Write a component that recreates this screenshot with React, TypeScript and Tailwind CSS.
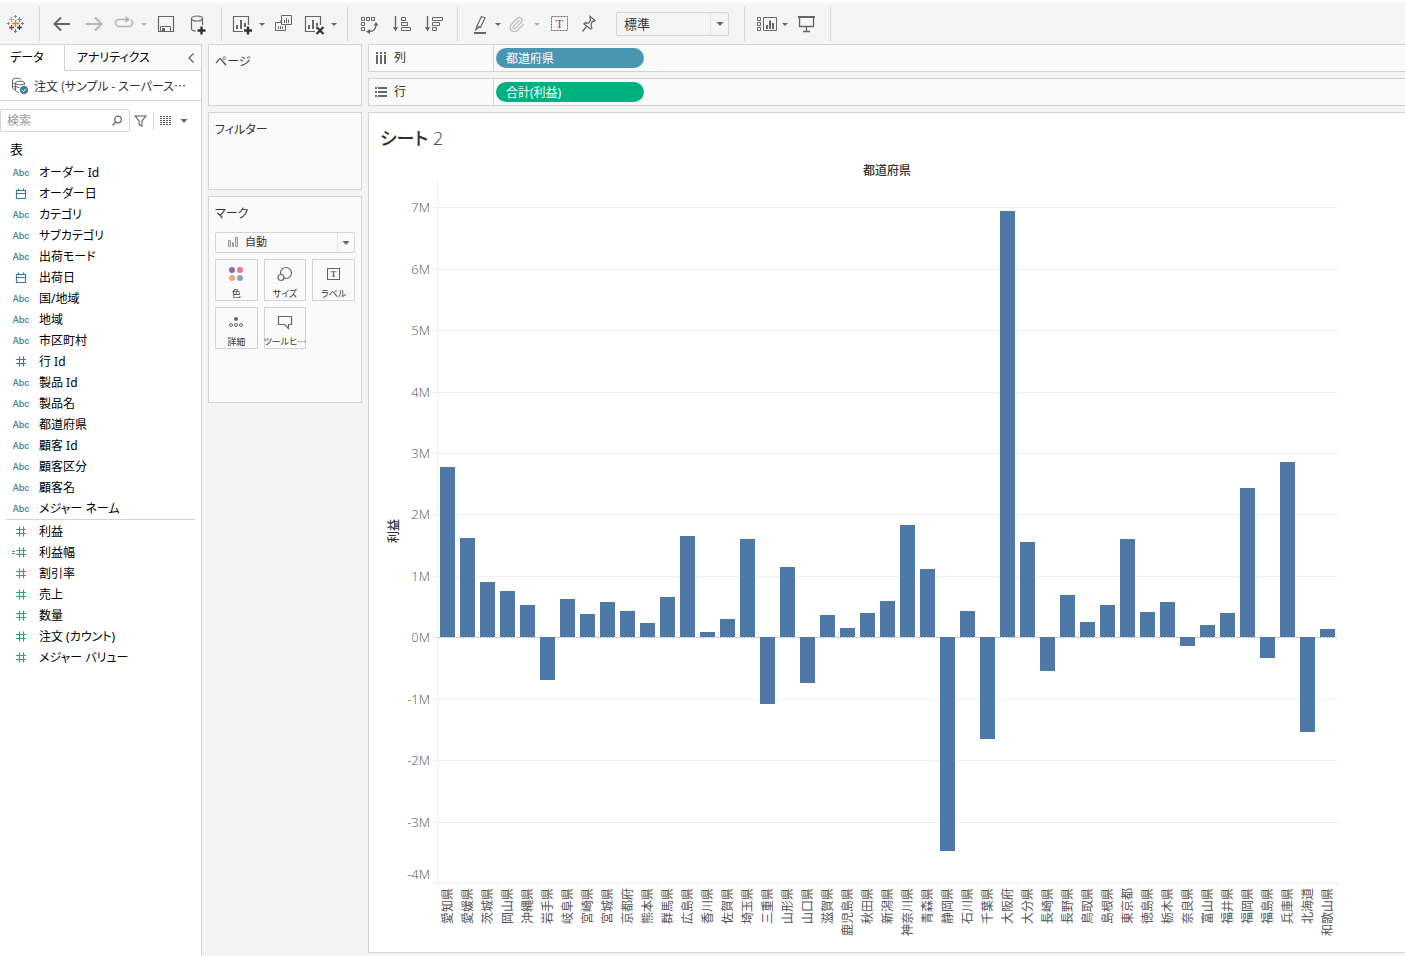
import React from 'react';
import { Paperclip } from 'lucide-react';

type IconProps = { children: React.ReactNode; className?: string };

const Icon = ({ children, className = 'text-[#666]' }: IconProps) => (
  <svg
    viewBox="0 0 24 24"
    className={`h-6 w-6 shrink-0 ${className}`}
    fill="none"
    stroke="currentColor"
    strokeWidth="1"
    aria-hidden="true"
  >
    {children}
  </svg>
);

const ToolButton = ({ label, className = '', children }: { label: string; className?: string; children: React.ReactNode }) => (
  <button type="button" aria-label={label} className={`flex h-6 w-6 shrink-0 items-center justify-center ${className}`}>
    {children}
  </button>
);

const Caret = ({ className = 'text-[#666]' }: { className?: string }) => (
  <svg viewBox="0 0 8 4" className={`h-1 w-2 shrink-0 ${className}`} fill="currentColor" aria-hidden="true">
    <path d="M0.5 0h7L4 4z" />
  </svg>
);

const CaretButton = ({ label, className = '', tone }: { label: string; className?: string; tone?: string }) => (
  <button type="button" aria-label={label} className={`flex h-6 w-3 shrink-0 items-center justify-center ${className}`}>
    <svg viewBox="0 0 6 3" className={`h-[3px] w-1.5 ${tone ?? 'text-[#666]'}`} fill="currentColor">
      <path d="M0 0h6L3 3z" />
    </svg>
  </button>
);

const Toolbar = () => (
  <header className="flex border-t-[3px] border-white bg-[#f5f5f5] pt-1 pb-[3px]">
    <div className="flex h-[34px] w-10 items-center border-r border-neutral-300 pl-1">
      <ToolButton label="スタート ページ">
        <Icon>
          <path d="M11.5 8v7M8 11.5h7" stroke="#eb8020" strokeWidth="1.4" />
          <path d="M7.5 5v5M5 7.5h5" stroke="#eb9a54" strokeWidth="1.200" />
          <path d="M15.5 5v5M13 7.500h5" stroke="#5f96a0" strokeWidth="1.200" />
          <path d="M7.5 13v5M5 15.500h5" stroke="#c4283a" strokeWidth="1.300" />
          <path d="M15.5 13v5M13 15.500h5" stroke="#1f447e" strokeWidth="1.300" />
          <path d="M11.5 3v3M10 4.500h3" stroke="#6f95b5" />
          <path d="M11.5 17v4M10 19.500h3" stroke="#5a78a5" />
          <path d="M4.500 10v3M3 11.500h3" stroke="#6f95b5" />
          <path d="M18.500 10v3M17 11.500h3" stroke="#7c6da0" />
        </Icon>
      </ToolButton>
    </div>

    <div className="flex items-center border-r border-neutral-300 pl-2.5 pr-[11px]">
      <ToolButton label="元に戻す">
        <Icon><path d="M4.5 12H20M11 5.5L4.5 12l6.500 6.500" strokeWidth="2" /></Icon>
      </ToolButton>
      <ToolButton label="やり直し" className="ml-2">
        <Icon className="text-[#b5b5b5]"><path d="M4 12h15.500M13 5.500l6.500 6.500-6.500 6.500" strokeWidth="2" /></Icon>
      </ToolButton>
      <ToolButton label="再生" className="ml-1.5">
        <Icon className="text-[#b5b5b5]">
          <path d="M15 7.500H7a3.500 3.500 0 0 0 0 7h10a3.500 3.500 0 0 0 2-6.400" strokeWidth="1.4" />
          <path d="M13.500 4l4.500 3.500-4.500 3.500z" fill="currentColor" stroke="none" />
        </Icon>
      </ToolButton>
      <CaretButton label="再生メニュー" className="ml-0.5" tone="text-[#b5b5b5]" />
      <ToolButton label="保存" className="ml-1">
        <Icon>
          <path d="M4.500 4.500h15v15h-15z" strokeWidth="1.2" />
          <path d="M6.500 19.500v-5h10v5" />
          <path d="M8 16h3v3H8z" fill="currentColor" stroke="none" />
        </Icon>
      </ToolButton>
      <ToolButton label="新しいデータ ソース" className="ml-2">
        <Icon>
          <ellipse cx="11" cy="6.500" rx="5.500" ry="2.500" strokeWidth="1.2" />
          <path d="M5.500 6.500V16.500c0 1.600 2 2.500 4.500 2.500M16.500 6.500V13" strokeWidth="1.2" />
          <path d="M15.500 14.500v8M11.500 18.500h8" stroke="#333" strokeWidth="2.400" />
        </Icon>
      </ToolButton>
    </div>

    <div className="flex items-center border-r border-neutral-300 pl-2 pr-[7px]">
      <ToolButton label="新しいワークシート">
        <Icon>
          <path d="M13 19.500H3.500v-15h15V13" strokeWidth="1.2" />
          <path d="M7 13v4M11 8v9M15 11v4" strokeWidth="2" />
          <path d="M18 14.500v8M14 18.500h8" stroke="#333" strokeWidth="2.400" />
        </Icon>
      </ToolButton>
      <CaretButton label="ワークシート メニュー" className="ml-0.5" />
      <ToolButton label="複製" className="ml-1">
        <Icon>
          <path d="M9.500 8V3.500h10v9h-5.500M9 8v2.500H3.500v8h10V12.500H9.500V8" />
          <path d="M12.500 8v3M14.500 6v5M16.500 7.500V11M6.500 14.500v2.500M8.500 14v3M10.500 14.500v2.500" />
        </Icon>
      </ToolButton>
      <ToolButton label="シートのクリア" className="ml-1.5">
        <Icon>
          <path d="M13 19.500H3.500v-15h15V13" strokeWidth="1.2" />
          <path d="M7 13v4M11 8v9M15 11v3" strokeWidth="2" />
          <path d="M14.500 15l7 7M21.500 15l-7 7" stroke="#333" strokeWidth="2.200" />
        </Icon>
      </ToolButton>
      <CaretButton label="クリア メニュー" className="ml-0.5" />
    </div>

    <div className="flex items-center gap-2 border-r border-neutral-300 pl-[9px] pr-3">
      <ToolButton label="行と列の交換">
        <Icon>
          <path d="M4.500 5.500h3v3h-3zM9.500 5.500h3v3h-3zM14.500 5.500h3v3h-3zM4.500 10.500h3v3h-3zM4.500 15.500h3v3h-3z" />
          <path d="M19 12.500c0 4-2.500 7-7 7" strokeWidth="1.4" />
          <path d="M16.500 13.500l2.500-3.500 2.500 3.500zM13 17v5l-4-2.500z" fill="currentColor" stroke="none" />
        </Icon>
      </ToolButton>
      <ToolButton label="昇順で並べ替え">
        <Icon>
          <path d="M6.500 4v12" strokeWidth="1.4" />
          <path d="M4 15h5l-2.500 4.500z" fill="currentColor" stroke="none" />
          <path d="M12.500 5.500h4v3h-4zM12.500 10.500h6v3h-6zM12.500 15.500h9v3h-9z" />
        </Icon>
      </ToolButton>
      <ToolButton label="降順で並べ替え">
        <Icon>
          <path d="M6.500 4v12" strokeWidth="1.4" />
          <path d="M4 15h5l-2.500 4.500z" fill="currentColor" stroke="none" />
          <path d="M11.500 5.500h10v3h-10zM11.500 10.500h7v3h-7zM11.500 15.500h4v3h-4z" />
        </Icon>
      </ToolButton>
    </div>

    <div className="flex items-center border-r border-neutral-300 pl-2.5 pr-[15px]">
      <ToolButton label="ハイライト">
        <Icon>
          <path d="M6 21h12" strokeWidth="2" />
          <path d="M13.500 4.500l3.500 1.500-4.500 9.500-3.500-1.700zM9 13.800L8 17.500l3.300-2.300M8 17.500l-1 1" strokeWidth="1.2" />
        </Icon>
      </ToolButton>
      <CaretButton label="ハイライト メニュー" />
      <ToolButton label="グループ メンバー">
        <Paperclip className="h-[17px] w-[17px] text-[#b5b5b5]" strokeWidth={1.5} />
      </ToolButton>
      <CaretButton label="グループ メニュー" className="ml-[3px]" tone="text-[#b5b5b5]" />
      <ToolButton label="マーク ラベルを表示" className="ml-1">
        <Icon>
          <path d="M4.500 4.500h16v14h-16z" strokeDasharray="2 1" />
          <text x="12.500" y="16" textAnchor="middle" fill="currentColor" stroke="none" className="font-['Liberation_Serif',serif] text-[13px]">T</text>
        </Icon>
      </ToolButton>
      <ToolButton label="軸の固定" className="ml-1.5">
        <Icon>
          <path d="M13 4.500l5 4-1.500 1-1-.3-1.500 3 .8 4-1.300.8-6.500-5 1-1.200 3.500.3 2-2.600zM9.500 14.500L5.500 19.500" strokeWidth="1.3" />
        </Icon>
      </ToolButton>
      <div className="relative ml-[15px] w-[113px] text-[#333]">
        <select aria-label="表示サイズ" className="block h-6 w-full appearance-none rounded-xs border border-neutral-300 bg-[#f5f5f5] px-[7px] text-[13px] leading-5">
          <option>標準</option>
        </select>
        <span className="pointer-events-none absolute inset-y-px right-px flex w-[18px] items-center justify-center border-l border-neutral-200">
          <Caret />
        </span>
      </div>
    </div>

    <div className="flex items-center border-r border-neutral-300 pl-2.5 pr-[11px]">
      <ToolButton label="表示形式">
        <Icon>
          <path d="M2.500 5.500h3v3h-3zM2.500 10.500h3v3h-3zM2.500 15.500h3v3h-3zM8.500 5.500h13v13h-13z" />
          <path d="M12 13v4M15 8.500V17M18 11v6" strokeWidth="2" />
        </Icon>
      </ToolButton>
      <CaretButton label="表示形式メニュー" />
      <ToolButton label="プレゼンテーション モード" className="ml-1">
        <Icon>
          <path d="M3 5h17" strokeWidth="2" />
          <path d="M4.500 5v9.500h14V5M11.500 14.500v5M8 19.500h7" strokeWidth="1.300" />
        </Icon>
      </ToolButton>
    </div>
  </header>
);

type FieldKind = 'abc' | 'date' | 'number' | 'calc';

const dimensions: [FieldKind, string][] = [
  ['abc', 'オーダー Id'],
  ['date', 'オーダー日'],
  ['abc', 'カテゴリ'],
  ['abc', 'サブカテゴリ'],
  ['abc', '出荷モード'],
  ['date', '出荷日'],
  ['abc', '国/地域'],
  ['abc', '地域'],
  ['abc', '市区町村'],
  ['number', '行 Id'],
  ['abc', '製品 Id'],
  ['abc', '製品名'],
  ['abc', '都道府県'],
  ['abc', '顧客 Id'],
  ['abc', '顧客区分'],
  ['abc', '顧客名'],
  ['abc', 'メジャー ネーム'],
];

const measures: [FieldKind, string][] = [
  ['number', '利益'],
  ['calc', '利益幅'],
  ['number', '割引率'],
  ['number', '売上'],
  ['number', '数量'],
  ['number', '注文 (カウント)'],
  ['number', 'メジャー バリュー'],
];

const FieldIcon = ({ kind }: { kind: FieldKind }) => {
  if (kind === 'abc') {
    return <span className="font-['Inter',sans-serif] text-[9px] font-medium">Abc</span>;
  }
  return (
    <svg viewBox="0 0 20 12" className="h-3 w-5" fill="none" stroke="currentColor" strokeWidth="1.2" aria-hidden="true">
      {kind === 'date' ? (
        <path d="M5.500 2.500h9v8h-9zM5.500 5.500h9M7.500 0.500v2M12.500 0.500v2" />
      ) : (
        <path d="M5 3.500h10M5 7.500h10M8.500 0.500v10M12.500 0.500v10" />
      )}
      {kind === 'calc' && <path d="M1 4.500h3M1 6.500h3" />}
    </svg>
  );
};

const FieldList = ({ fields, tone }: { fields: [FieldKind, string][]; tone: string }) => (
  <ul>
    {fields.map(([kind, name]) => (
      <li key={name} className="flex h-[21px] items-center pl-[11px] text-[12px] text-black">
        <span className={`flex w-5 justify-center ${tone}`}>
          <FieldIcon kind={kind} />
        </span>
        <span className="ml-2 whitespace-nowrap">{name}</span>
      </li>
    ))}
  </ul>
);

const DataPane = () => (
  <aside className="w-[202px] shrink-0 border-t border-r border-neutral-300 bg-white">
    <div className="flex h-[26px] text-[12px] text-black">
      <button type="button" className="w-16 pl-[10px] text-left">データ</button>
      <div className="flex flex-1 items-center justify-between border-b border-l border-neutral-300 bg-[#fafafa] pl-3 pr-1.5">
        <button type="button">アナリティクス</button>
        <button type="button" aria-label="サイド バーを折りたたむ">
          <svg viewBox="0 0 8 10" className="h-2.5 w-2" fill="none" stroke="#666" strokeWidth="1.3"><path d="M6.500 0.500L2 5l4.500 4.500" /></svg>
        </button>
      </div>
    </div>

    <div className="flex h-[30px] items-center border-b border-neutral-300 pl-[11px] text-[12px] text-[#333]">
      <svg viewBox="0 0 18 18" className="h-[18px] w-[18px] shrink-0" fill="none" stroke="#666" aria-hidden="true">
        <path d="M4 12.500C2.500 12.300 1.500 11.600 1.500 11V3c0-1 2-1.800 4.500-1.800 2 0 3.500.5 4.200 1.200M1.500 5.500c.3.600 1.200 1 2.500 1.200M1.500 8.500c.3.600 1.200 1 2.500 1.200" />
        <path d="M4.500 6v7.500c0 .8 1.500 1.500 3.500 1.700M13.500 6v2" />
        <ellipse cx="9" cy="6" rx="4.500" ry="1.900" />
        <path d="M4.500 9c.5.900 2 1.500 4 1.500" />
        <circle cx="13" cy="13" r="4" fill="#3a7ea1" stroke="none" />
        <path d="M11 13l1.500 1.500 2.600-2.800" stroke="#fff" />
      </svg>
      <span className="ml-[5px] whitespace-nowrap font-['Noto_Sans_CJK_JP',sans-serif]">注文 (サンプル - スーパース…</span>
    </div>

    <div className="mt-2 flex items-center">
      <div className="flex h-[23px] w-[130px] items-center rounded-xs border border-neutral-300 pr-1.5">
        <input type="text" aria-label="検索" placeholder="検索" className="h-5 w-full min-w-0 pl-1.5 text-[12px] outline-none placeholder:text-[#999]" />
        <svg viewBox="0 0 12 12" className="h-3 w-3 shrink-0" fill="none" stroke="#666" strokeWidth="1.2" aria-hidden="true">
          <circle cx="7" cy="4.500" r="3.300" />
          <path d="M4.700 7L1.500 10.500" />
        </svg>
      </div>
      <button type="button" aria-label="フィルター" className="ml-1 border-r border-neutral-300 pr-1.5">
        <svg viewBox="0 0 14 16" className="h-[18px] w-[13px]" fill="none" stroke="#555" strokeWidth="1.100"><path d="M1 2.500h12L8.500 8v5.500l-3-1.500V8z" /></svg>
      </button>
      <button type="button" aria-label="表示方法" className="ml-1.5 flex items-center gap-2">
        <svg viewBox="0 0 12 9" className="h-[9px] w-3" fill="none" stroke="#555">
          <path d="M0 0.500h12M0 2.500h12M0 4.500h12M0 6.500h12M0 8.500h12" strokeDasharray="2 1" />
        </svg>
        <Caret />
      </button>
    </div>

    <h2 className="mt-[7px] mb-[3px] pl-[10px] text-[13px] leading-5 text-black">表</h2>
    <FieldList fields={dimensions} tone="text-[#3a7d96]" />
    <hr className="mx-1.5 mb-px border-neutral-300" />
    <FieldList fields={measures} tone="text-[#3c9c78]" />
  </aside>
);

const Card = ({ title, className, children }: { title: string; className: string; children?: React.ReactNode }) => (
  <section className={`border border-neutral-300 bg-[#fafafa] px-1.5 pt-2 ${className}`}>
    <h2 className="text-[12px] leading-[18px] text-[#333]">{title}</h2>
    {children}
  </section>
);

const MarkButton = ({ label, children }: { label: string; children: React.ReactNode }) => (
  <button type="button" className="flex h-[42px] min-w-0 flex-col items-center border border-neutral-300 pt-0.5 text-[#333]">
    <Icon className="text-[#666]">{children}</Icon>
    <span className="whitespace-nowrap font-['Noto_Sans_CJK_JP',sans-serif] text-[9px] leading-4">{label}</span>
  </button>
);

const Cards = () => (
  <div className="flex w-[154px] shrink-0 flex-col gap-1.5">
    <Card title="ページ" className="h-[62px]" />
    <Card title="フィルター" className="h-[78px]" />
    <Card title="マーク" className="h-[207px]">
      <div className="relative mt-[9px] text-[#333]">
        <select aria-label="マーク タイプ" className="block h-[21px] w-full appearance-none rounded-xs border border-neutral-300 bg-[#fafafa] pl-[29px] text-[11px]">
          <option>自動</option>
        </select>
        <svg viewBox="0 0 12 10" className="pointer-events-none absolute top-[5px] left-3 h-2.5 w-3" fill="#ddd" stroke="#999" aria-hidden="true">
          <path d="M1.500 3.500h2v6h-2zM5.500 5.500h1v4h-1zM8.500 0.500h2v9h-2z" />
        </svg>
        <span className="pointer-events-none absolute inset-y-px right-px flex w-[17px] items-center justify-center border-l border-neutral-200">
          <Caret />
        </span>
      </div>
      <div className="mt-1.5 grid grid-cols-3 gap-1.5">
        <MarkButton label="色">
          <g stroke="none">
            <circle cx="8" cy="8" r="3" fill="#84709b" />
            <circle cx="16" cy="8" r="3" fill="#fc7183" />
            <circle cx="8" cy="16" r="3" fill="#f5a678" />
            <circle cx="16" cy="16" r="3" fill="#80a4cb" />
          </g>
        </MarkButton>
        <MarkButton label="サイズ">
          <circle cx="13" cy="11" r="5.500" strokeWidth="1.200" />
          <circle cx="8" cy="15.500" r="3" fill="#fafafa" strokeWidth="1.200" />
        </MarkButton>
        <MarkButton label="ラベル">
          <path d="M5.500 6.500h12v11h-12z" strokeWidth="1.100" />
          <text x="11.500" y="15" textAnchor="middle" fill="currentColor" stroke="none" className="font-['Liberation_Serif',serif] text-[9px] font-bold">T</text>
        </MarkButton>
        <MarkButton label="詳細">
          <circle cx="12" cy="9" r="2" fill="currentColor" stroke="none" />
          <circle cx="7" cy="15" r="1.500" />
          <circle cx="12" cy="15" r="1.500" />
          <circle cx="17" cy="15" r="1.500" />
        </MarkButton>
        <MarkButton label="ツールヒ…">
          <path d="M5.500 6.500h13v8h-3v4l-4-4h-6z" strokeWidth="1.200" />
        </MarkButton>
      </div>
    </Card>
  </div>
);

const Shelf = ({ label, pill, pillColor, icon }: { label: string; pill: string; pillColor: string; icon: React.ReactNode }) => (
  <div className="flex h-7 items-center border-y border-l border-neutral-300 bg-[#fafafa] text-[12px]">
    <div className="flex h-full w-[125px] items-center border-r border-neutral-300 pl-1.5 text-[#333]">
      <svg viewBox="0 0 12 12" className="mr-[7px] h-3 w-3" fill="#666" aria-hidden="true">{icon}</svg>
      {label}
    </div>
    <button type="button" className={`ml-0.5 h-5 w-[148px] rounded-full pt-0.5 pl-[10px] text-left leading-[18px] text-white ${pillColor}`}>
      {pill}
    </button>
  </div>
);

// profit by prefecture, in millions
const data: [string, number][] = [
  ['愛知県', 2.77], ['愛媛県', 1.62], ['茨城県', 0.9], ['岡山県', 0.76], ['沖縄県', 0.53],
  ['岩手県', -0.69], ['岐阜県', 0.63], ['宮崎県', 0.38], ['宮城県', 0.58], ['京都府', 0.43],
  ['熊本県', 0.23], ['群馬県', 0.66], ['広島県', 1.65], ['香川県', 0.09], ['佐賀県', 0.3],
  ['埼玉県', 1.6], ['三重県', -1.08], ['山形県', 1.15], ['山口県', -0.74], ['滋賀県', 0.36],
  ['鹿児島県', 0.15], ['秋田県', 0.4], ['新潟県', 0.59], ['神奈川県', 1.83], ['青森県', 1.11],
  ['静岡県', -3.48], ['石川県', 0.43], ['千葉県', -1.65], ['大阪府', 6.93], ['大分県', 1.55],
  ['長崎県', -0.55], ['長野県', 0.69], ['鳥取県', 0.25], ['島根県', 0.53], ['東京都', 1.6],
  ['徳島県', 0.41], ['栃木県', 0.58], ['奈良県', -0.14], ['富山県', 0.2], ['福井県', 0.4],
  ['福岡県', 2.43], ['福島県', -0.33], ['兵庫県', 2.85], ['北海道', -1.54], ['和歌山県', 0.14],
];

const STEP = 20;
const LEFT = 57;
const TOP = 26;
const BOTTOM = 728;
const ZERO = 482;
const UNIT = 61.45;
const RIGHT = LEFT + data.length * STEP;
const ticks = [7, 6, 5, 4, 3, 2, 1, 0, -1, -2, -3];

const yOf = (value: number) => Math.round(ZERO + 0.3 - value * UNIT);

const BarChart = () => (
  <svg width="960" height="790" viewBox="0 0 960 790" role="img" aria-label="都道府県別の利益" className="block font-['Open_Sans','Noto_Sans_CJK_JP',sans-serif]" fill="#555">
    <text x={(LEFT + RIGHT) / 2} y="20" textAnchor="middle" className="text-[12px] font-medium" fill="#333">都道府県</text>
    <text transform="rotate(-90 18 376)" x="18" y="376" textAnchor="middle" className="text-[12px] font-medium" fill="#333">利益</text>

    {ticks.map((t) => (
      <g key={t}>
        <rect x={LEFT - 5} y={yOf(t)} width={t === 0 ? 5 : RIGHT - LEFT + 6} height="1" fill="#f0f0f0" />
        <text x="50" y={yOf(t) + 5} textAnchor="end" className="text-[13px] font-light">{t}M</text>
      </g>
    ))}
    <text x="50" y={BOTTOM - 4} textAnchor="end" className="text-[13px] font-light">-4M</text>

    <path d={`M${LEFT + 0.5} ${TOP}V${BOTTOM}M${LEFT - 5} ${BOTTOM + 0.5}H${RIGHT + 1}`} stroke="#f0f0f0" />
    <path d={`M${LEFT + 1} ${ZERO + 0.5}H${RIGHT + 1}`} stroke="#bbb" strokeDasharray="2 1" />

    {data.map(([name, value], i) => {
      const x = LEFT + i * STEP;
      const y = yOf(value);
      return (
        <g key={name}>
          <rect x={x + 3} y={Math.min(y, ZERO)} width="15" height={Math.abs(y - ZERO)} fill="#4e79a7" />
          <rect x={x} y={BOTTOM} width="1" height="4" fill="#f0f0f0" />
          <text transform={`rotate(-90 ${x + 15} 733)`} x={x + 15} y="733" textAnchor="end" className="text-[12px]">{name}</text>
        </g>
      );
    })}
    <rect x={RIGHT} y={BOTTOM} width="1" height="4" fill="#f0f0f0" />
  </svg>
);

const App = () => {
  return (
    <div className="flex min-h-screen flex-col overflow-x-hidden bg-[#f4f4f4] font-['Noto_Sans','Noto_Sans_CJK_JP',sans-serif] [font-feature-settings:'palt']">
      <Toolbar />
      <div className="flex flex-1">
        <DataPane />
        <div className="flex min-w-0 flex-1 gap-1.5 pl-1.5">
          <Cards />
          <main className="flex min-w-0 flex-1 flex-col gap-1.5 pb-[3px]">
            <Shelf
              label="列"
              pill="都道府県"
              pillColor="bg-[#4996b2]"
              icon={<path d="M1 0h2v2H1zM5 0h2v2H5zM9 0h2v2H9zM1 3h2v9H1zM5 3h2v9H5zM9 3h2v9H9z" />}
            />
            <Shelf
              label="行"
              pill="合計(利益)"
              pillColor="bg-[#00b180]"
              icon={<path d="M0 1h2v2H0zM0 5h2v2H0zM0 9h2v2H0zM3 1h9v2H3zM3 5h9v2H3zM3 9h9v2H3z" />}
            />
            <section className="flex-1 border-y border-l border-neutral-300 bg-white px-[11px] pt-3">
              <h1 className="mb-1 font-['Open_Sans','Noto_Sans_CJK_JP',sans-serif] text-[18px] leading-[26px] font-light text-[#333]">
                <span className="font-medium">シート</span> 2
              </h1>
              <BarChart />
            </section>
          </main>
        </div>
      </div>
    </div>
  );
};

export default App;
